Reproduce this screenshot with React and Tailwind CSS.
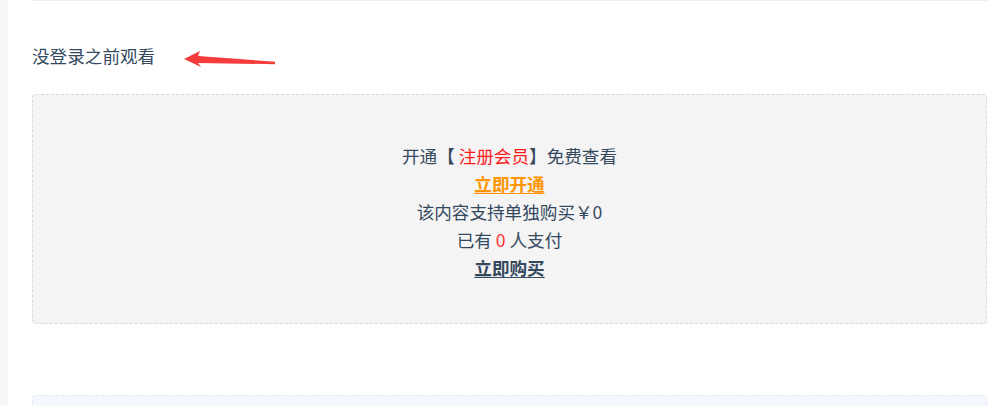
import React from "react";

const FONT = { fontFamily: '"Microsoft YaHei", "Noto Sans CJK SC", sans-serif' };

function RedArrow() {
  return (
    <svg width="96" height="20" viewBox="0 0 96 20" className="ml-[28px] mt-[7px] shrink-0">
      <polygon
        points="1,10 17,2 15,7 92,12.8 92,15.2 15,14 18,18"
        fill="#f53b3b"
      />
    </svg>
  );
}

export default function App() {
  return (
    <div className="flex w-[1000px] h-[406px] overflow-hidden bg-white text-[#34495e]" style={FONT}>
      <div className="w-2 shrink-0 bg-[#f7f7f7]" />
      <main className="flex-1 pl-6 pr-[13px]">
        <div className="h-px bg-[#eeeeee]" />

        <div className="flex items-start mt-[41px] h-[28px]">
          <span className="text-[17.6px] leading-7">没登录之前观看</span>
          <RedArrow />
        </div>

        <section className="mt-[24px] h-[230px] rounded border border-dashed border-[#d9d9d9] bg-[#f4f4f4] pt-[47px] text-center text-[17.6px] leading-[28px]">
          <p>
            开通【 <span className="text-[#ff1a1a]">注册会员</span>】免费查看
          </p>
          <p>
            <a className="font-bold text-[#ff9500] underline underline-offset-2 cursor-pointer">立即开通</a>
          </p>
          <p>该内容支持单独购买￥0</p>
          <p>
            已有 <span className="text-[#ff3333]">0</span> 人支付
          </p>
          <p>
            <a className="font-bold text-[#34495e] underline underline-offset-2 cursor-pointer">立即购买</a>
          </p>
        </section>

        <section className="mt-[71px] h-[80px] rounded border border-dashed border-[#e3e8ee] bg-[#f5f9ff]" />
      </main>
    </div>
  );
}
